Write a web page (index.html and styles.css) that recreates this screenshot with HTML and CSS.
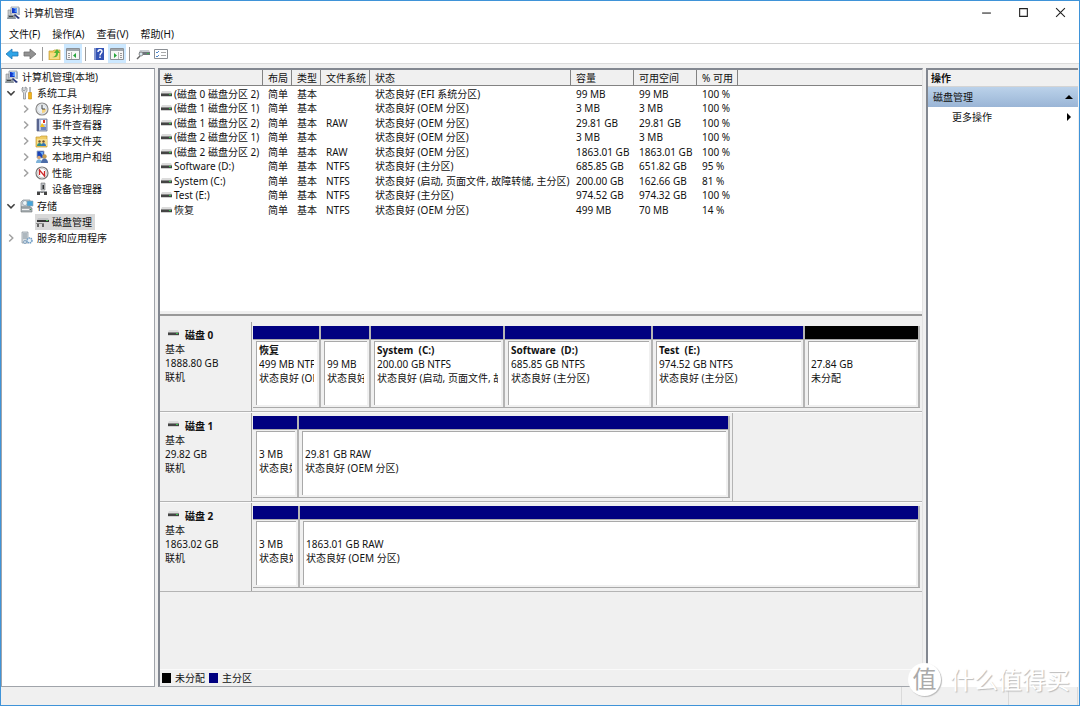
FILE: index.html
```html
<!DOCTYPE html>
<html lang="zh-CN">
<head>
<meta charset="utf-8">
<meta name="viewport" content="width=device-width, initial-scale=1">
<title>计算机管理</title>
<link rel="stylesheet" href="styles.css">
</head>
<body>
<svg class="defs" aria-hidden="true">
  <symbol id="i-computer" viewBox="0 0 14 14">
    <path d="M1 4h3v6H1z" fill="#c3c8cd" stroke="#888" stroke-width=".6"/>
    <path d="M4 1h8v7H4z" fill="#dfe3e8" stroke="#8a9098" stroke-width=".7"/>
    <path d="M5 2h5v5H5z" fill="#1238c8"/><path d="M6 2l3 2-2 1 3 2V2z" fill="#5fa0ff"/>
    <path d="M11 2h2v7h-2z" fill="#aab4c4"/>
    <path d="M1 9h7l1 4H0z" fill="#8d969c"/><path d="M2 10h4v1H2z" fill="#444"/>
    <path d="M8 8l5 4-2 1-4-4z" fill="#26357a"/>
  </symbol>
  <symbol id="i-tools" viewBox="0 0 14 14">
    <path d="M3 1v3l1 1 1-1V1l2 1v3L5.500 7v6h-2V7L2 5V2z" fill="#d8dadd" stroke="#808489" stroke-width=".7"/>
    <path d="M10 1v6" stroke="#8c9197" stroke-width="1.300"/><path d="M8.500 6.500h3v6.500h-3z" fill="#f0b41c" stroke="#c98a0a" stroke-width=".6"/>
  </symbol>
  <symbol id="i-clock" viewBox="0 0 14 14">
    <circle cx="7" cy="7" r="6" fill="#fafafa" stroke="#8c8c8c" stroke-width="1.200"/><circle cx="7" cy="7" r="4.600" fill="#e9eef3" stroke="#c5c9cc" stroke-width=".6"/>
    <path d="M7 7h4a4 4 0 0 1-4 4z" fill="#f5d27e"/><path d="M7 3v4h3" fill="none" stroke="#444" stroke-width="1"/>
  </symbol>
  <symbol id="i-events" viewBox="0 0 14 14">
    <path d="M2 1h10v12H2z" fill="#b9c6e4" stroke="#6a7390" stroke-width=".8"/><path d="M2 1h2v12H2z" fill="#59658f"/>
    <path d="M6 2h5v4H6z" fill="#fff"/><path d="M8 2h2v3H8z" fill="#d93222"/><path d="M5 9l2-4 3 4z" fill="#f3c21d"/><path d="M6 9h5v3H6z" fill="#6f85be"/>
  </symbol>
  <symbol id="i-share" viewBox="0 0 14 14">
    <path d="M1 3h4l1-1h6v11H1z" fill="#f1cc63" stroke="#c49a31" stroke-width=".7"/><path d="M2 5h10v7H2z" fill="#f8e08f"/>
    <circle cx="4.500" cy="7.500" r="1.200" fill="#725131"/><circle cx="8.500" cy="7.500" r="1.200" fill="#725131"/>
    <path d="M2 12c0-4 5-4 5 0z" fill="#2f8d83"/><path d="M6 12c0-4 5-4 5 0z" fill="#3576b8"/>
  </symbol>
  <symbol id="i-users" viewBox="0 0 14 14">
    <path d="M2 1h7v7H2z" fill="#1743b9" stroke="#9ca8b9" stroke-width=".8"/><path d="M5 2h3v4z" fill="#66a8f2"/>
    <circle cx="4" cy="7.500" r="1.800" fill="#d6a676"/><path d="M1 13c0-5 6-5 6 0z" fill="#7eb2d9"/>
    <circle cx="9.500" cy="6.500" r="2.200" fill="#c39a50"/><path d="M6 13c0-6 7-6 7 0z" fill="#4c6da8"/>
  </symbol>
  <symbol id="i-perf" viewBox="0 0 14 14">
    <circle cx="7" cy="7" r="6" fill="#fff" stroke="#787878" stroke-width="1.200"/><circle cx="7" cy="7" r="4.500" fill="none" stroke="#aaa" stroke-width=".6"/>
    <path d="M4.500 9V4l5 6V5" fill="none" stroke="#cc2929" stroke-width="1.300"/>
  </symbol>
  <symbol id="i-device" viewBox="0 0 14 14">
    <path d="M6 1h4v7H6z" fill="#b7bbc0" stroke="#777" stroke-width=".6"/><path d="M7.500 3h1.500v4H7.500z" fill="#313131"/>
    <path d="M2 9h10v2H2z" fill="#9fa4a9"/><path d="M2 10h3v3H2zM9 10h3v3H9z" fill="#444"/><path d="M6 10h2v1H6z" fill="#777"/>
  </symbol>
  <symbol id="i-storage" viewBox="0 0 14 14">
    <path d="M1 3l2-2h7v7H1z" fill="#d4d9dd" stroke="#7f878d" stroke-width=".7"/><circle cx="5" cy="4" r="2.500" fill="#eef5f7" stroke="#789" stroke-width=".6"/>
    <path d="M7 2h6v5H7z" fill="#48a4d8" stroke="#96a5ad" stroke-width=".6"/>
    <path d="M1 8h9l2 1v4H1z" fill="#a8afb3" stroke="#6b7276" stroke-width=".6"/><path d="M2 10h7v1H2z" fill="#f1f1f1"/><path d="M10 10h1v1h-1z" fill="#2ea943"/>
  </symbol>
  <symbol id="i-diskmgmt" viewBox="0 0 14 14">
    <path d="M3 3h10l1 2H2z" fill="#c2c4c6"/><path d="M2 5h12v2H2z" fill="#363636"/><path d="M11 5h2v1h-2z" fill="#4fc25c"/>
    <path d="M1 8h8v1H1z" fill="#909090"/><path d="M2 9h2v3H2zM7 9h2v3H7z" fill="#666"/>
  </symbol>
  <symbol id="i-services" viewBox="0 0 14 14">
    <path d="M2 1h6v11H2z" fill="#d7dce0" stroke="#88929b" stroke-width=".7"/><path d="M3 3h4M3 5h4M3 7h4" stroke="#70808d" stroke-width=".8"/>
    <circle cx="9.500" cy="9.500" r="2.500" fill="#e9f2f9" stroke="#6f9cc4" stroke-width="1.500" stroke-dasharray="1.500 .6"/><circle cx="5" cy="11" r="1.500" fill="#d8e4ee" stroke="#7397b8" stroke-width=".8"/>
  </symbol>
  <symbol id="i-drive" viewBox="0 0 11 6">
    <path d="M1 0h9l1 2H0z" fill="#dcdcdc"/><path d="M0 2h11v3H0z" fill="#444"/><path d="M0 2h11v1H0z" fill="#8a8a8a"/><path d="M0 5h11v1H0z" fill="#d0d0d0"/><path d="M8 3h2v1H8z" fill="#37c24b"/>
  </symbol>
  <symbol id="i-open" viewBox="0 0 10 10"><path d="M2 3.500l3 3 3-3" fill="none" stroke="#404040" stroke-width="1.300"/></symbol>
  <symbol id="i-closed" viewBox="0 0 10 10"><path d="M3.500 2l3 3-3 3" fill="none" stroke="#a0a0a0" stroke-width="1.200"/></symbol>
  <symbol id="i-pane-left" viewBox="0 0 14 12">
    <path d="M.5.5h13v11H.5z" fill="#f6f6f6" stroke="#8b9096"/><path d="M1 1h12v2H1z" fill="#a1a7ad"/><path d="M2 5.500h2M2 7.500h2M2 9.500h2" stroke="#999"/><path d="M5.500 4v7" stroke="#b5b5b5"/><path d="M10 5v5L7 7.500z" fill="#26a53a"/>
  </symbol>
  <symbol id="i-pane-right" viewBox="0 0 14 12">
    <path d="M.5.5h13v11H.5z" fill="#f6f6f6" stroke="#8b9096"/><path d="M1 1h12v2H1z" fill="#a1a7ad"/><path d="M10 5.500h2M10 7.500h2M10 9.500h2" stroke="#999"/><path d="M8.500 4v7" stroke="#b5b5b5"/><path d="M4 5v5l3-2.500z" fill="#26a53a"/>
  </symbol>
</svg>

<div class="window">
  <header class="titlebar">
    <svg class="icon"><use href="#i-computer"/></svg>
    <h1 class="title">计算机管理</h1>
    <button class="caption" aria-label="最小化"><svg viewBox="0 0 10 10"><path d="M1 5.500h8" stroke="#222" fill="none"/></svg></button>
    <button class="caption" aria-label="最大化"><svg viewBox="0 0 10 10"><path d="M1.500 1.500h7v7h-7z" stroke="#222" fill="none"/></svg></button>
    <button class="caption" aria-label="关闭"><svg viewBox="0 0 10 10"><path d="M1 1l8 8M9 1L1 9" stroke="#222" fill="none"/></svg></button>
  </header>

  <nav class="menubar">
    <button>文件(F)</button><button>操作(A)</button><button>查看(V)</button><button>帮助(H)</button>
  </nav>

  <div class="toolbar">
    <button class="tool" aria-label="后退"><svg viewBox="0 0 14 12"><path d="M1 6l6-5v3h6v4H7v3z" fill="#2fa4e7" stroke="#2277b5" stroke-width=".8"/></svg></button>
    <button class="tool" aria-label="前进"><svg viewBox="0 0 14 12"><path d="M13 6L7 1v3H1v4h6v3z" fill="#929292" stroke="#6f6f6f" stroke-width=".8"/></svg></button>
    <span class="sep"></span>
    <button class="tool" aria-label="上一级"><svg viewBox="0 0 14 12"><path d="M1 3h4l1-1h6v10H1z" fill="#efc95c" stroke="#c39b36" stroke-width=".7"/><path d="M2 5h9v6H2z" fill="#f7dd85"/><path d="M4 9c3 0 4-2 4-4H6l3-4 3 4h-2c0 4-2 5-6 4z" fill="#54b434"/></svg></button>
    <button class="tool on" aria-label="显示控制台树"><svg><use href="#i-pane-left"/></svg></button>
    <span class="sep"></span>
    <button class="tool" aria-label="帮助"><svg viewBox="0 0 14 12"><path d="M2 0h10v12H2z" fill="#3453b5"/><path d="M2 0h2v12H2z" fill="#8295cf"/><path d="M6 4c0-3 4-3 4-.5C10 5 8 5 8 7.500M8 8.500v1.500" fill="none" stroke="#fff" stroke-width="1.400"/></svg></button>
    <button class="tool on" aria-label="显示操作窗格"><svg><use href="#i-pane-right"/></svg></button>
    <span class="sep"></span>
    <button class="tool" aria-label="重新扫描磁盘"><svg viewBox="0 0 14 12"><path d="M4 2h9l1 2H3z" fill="#c7cbd0"/><path d="M3 4h11v3H3z" fill="#6f757b"/><path d="M11 5h2v1h-2z" fill="#37b54a"/><circle cx="5" cy="6" r="2" fill="#d9e8ef" stroke="#777" stroke-width=".8"/><path d="M4 8l-3 3" stroke="#666" stroke-width="1.400"/></svg></button>
    <button class="tool" aria-label="属性"><svg viewBox="0 0 14 12"><path d="M.5 1.500h13v9H.5z" fill="#fff" stroke="#8b8f94"/><path d="M2 4l1 1 2-2M2 8l1 1 2-2" fill="none" stroke="#3978c5" stroke-width=".9"/><path d="M7 4.500h5M7 7.500h5" stroke="#aaa"/></svg></button>
  </div>

  <main class="content">
    <nav class="tree" aria-label="控制台树">
      <div class="node root"><svg class="icon"><use href="#i-computer"/></svg><span>计算机管理(本地)</span></div>
      <div class="group">
        <div class="node"><svg class="chev"><use href="#i-open"/></svg><svg class="icon"><use href="#i-tools"/></svg><span>系统工具</span></div>
        <div class="node sub"><svg class="chev"><use href="#i-closed"/></svg><svg class="icon"><use href="#i-clock"/></svg><span>任务计划程序</span></div>
        <div class="node sub"><svg class="chev"><use href="#i-closed"/></svg><svg class="icon"><use href="#i-events"/></svg><span>事件查看器</span></div>
        <div class="node sub"><svg class="chev"><use href="#i-closed"/></svg><svg class="icon"><use href="#i-share"/></svg><span>共享文件夹</span></div>
        <div class="node sub"><svg class="chev"><use href="#i-closed"/></svg><svg class="icon"><use href="#i-users"/></svg><span>本地用户和组</span></div>
        <div class="node sub"><svg class="chev"><use href="#i-closed"/></svg><svg class="icon"><use href="#i-perf"/></svg><span>性能</span></div>
        <div class="node sub"><span class="chev"></span><svg class="icon"><use href="#i-device"/></svg><span>设备管理器</span></div>
      </div>
      <div class="group">
        <div class="node"><svg class="chev"><use href="#i-open"/></svg><svg class="icon"><use href="#i-storage"/></svg><span>存储</span></div>
        <div class="node sub"><span class="chev"></span><div class="selected"><svg class="icon"><use href="#i-diskmgmt"/></svg><span>磁盘管理</span></div></div>
        <div class="node"><svg class="chev"><use href="#i-closed"/></svg><svg class="icon"><use href="#i-services"/></svg><span>服务和应用程序</span></div>
      </div>
    </nav>

    <section class="center">
      <div class="volumes">
        <table>
          <colgroup><col class="c-name"><col class="c-short"><col class="c-short"><col class="c-fs"><col class="c-status"><col class="c-size"><col class="c-size"><col class="c-pct"><col></colgroup>
          <thead><tr><th>卷</th><th>布局</th><th>类型</th><th>文件系统</th><th>状态</th><th>容量</th><th>可用空间</th><th>% 可用</th><th></th></tr></thead>
          <tbody>
            <tr><td><svg class="drive"><use href="#i-drive"/></svg>(磁盘 0 磁盘分区 2)</td><td>简单</td><td>基本</td><td></td><td>状态良好 (EFI 系统分区)</td><td>99 MB</td><td>99 MB</td><td>100 %</td><td></td></tr>
            <tr><td><svg class="drive"><use href="#i-drive"/></svg>(磁盘 1 磁盘分区 1)</td><td>简单</td><td>基本</td><td></td><td>状态良好 (OEM 分区)</td><td>3 MB</td><td>3 MB</td><td>100 %</td><td></td></tr>
            <tr><td><svg class="drive"><use href="#i-drive"/></svg>(磁盘 1 磁盘分区 2)</td><td>简单</td><td>基本</td><td>RAW</td><td>状态良好 (OEM 分区)</td><td>29.81 GB</td><td>29.81 GB</td><td>100 %</td><td></td></tr>
            <tr><td><svg class="drive"><use href="#i-drive"/></svg>(磁盘 2 磁盘分区 1)</td><td>简单</td><td>基本</td><td></td><td>状态良好 (OEM 分区)</td><td>3 MB</td><td>3 MB</td><td>100 %</td><td></td></tr>
            <tr><td><svg class="drive"><use href="#i-drive"/></svg>(磁盘 2 磁盘分区 2)</td><td>简单</td><td>基本</td><td>RAW</td><td>状态良好 (OEM 分区)</td><td>1863.01 GB</td><td>1863.01 GB</td><td>100 %</td><td></td></tr>
            <tr><td><svg class="drive"><use href="#i-drive"/></svg>Software (D:)</td><td>简单</td><td>基本</td><td>NTFS</td><td>状态良好 (主分区)</td><td>685.85 GB</td><td>651.82 GB</td><td>95 %</td><td></td></tr>
            <tr><td><svg class="drive"><use href="#i-drive"/></svg>System (C:)</td><td>简单</td><td>基本</td><td>NTFS</td><td>状态良好 (启动, 页面文件, 故障转储, 主分区)</td><td>200.00 GB</td><td>162.66 GB</td><td>81 %</td><td></td></tr>
            <tr><td><svg class="drive"><use href="#i-drive"/></svg>Test (E:)</td><td>简单</td><td>基本</td><td>NTFS</td><td>状态良好 (主分区)</td><td>974.52 GB</td><td>974.32 GB</td><td>100 %</td><td></td></tr>
            <tr><td><svg class="drive"><use href="#i-drive"/></svg>恢复</td><td>简单</td><td>基本</td><td>NTFS</td><td>状态良好 (OEM 分区)</td><td>499 MB</td><td>70 MB</td><td>14 %</td><td></td></tr>
          </tbody>
        </table>
      </div>

      <div class="disks">
        <article class="disk">
          <div class="info"><h2><svg class="drive"><use href="#i-drive"/></svg>磁盘 0</h2><p>基本</p><p>1888.80 GB</p><p>联机</p></div>
          <div class="track"><div class="parts" style="grid-template-columns:68fr 50fr 134fr 148fr 152fr 115fr">
            <div class="part"><div class="box"><b>恢复</b><p>499 MB NTFS</p><p>状态良好 (OEM 分区)</p></div></div>
            <div class="part"><div class="box"><b></b><p>99 MB</p><p>状态良好 (EFI 系统分区)</p></div></div>
            <div class="part"><div class="box"><b>System&nbsp; (C:)</b><p>200.00 GB NTFS</p><p>状态良好 (启动, 页面文件, 故障转储, 主分区)</p></div></div>
            <div class="part"><div class="box"><b>Software&nbsp; (D:)</b><p>685.85 GB NTFS</p><p>状态良好 (主分区)</p></div></div>
            <div class="part"><div class="box"><b>Test&nbsp; (E:)</b><p>974.52 GB NTFS</p><p>状态良好 (主分区)</p></div></div>
            <div class="part free"><div class="box"><b></b><p>27.84 GB</p><p>未分配</p></div></div>
          </div></div>
        </article>
        <article class="disk">
          <div class="info"><h2><svg class="drive"><use href="#i-drive"/></svg>磁盘 1</h2><p>基本</p><p>29.82 GB</p><p>联机</p></div>
          <div class="track short" style="width:72%"><div class="parts" style="grid-template-columns:46fr 431fr">
            <div class="part"><div class="box"><b></b><p>3 MB</p><p>状态良好 (OEM 分区)</p></div></div>
            <div class="part"><div class="box"><b></b><p>29.81 GB RAW</p><p>状态良好 (OEM 分区)</p></div></div>
          </div></div>
        </article>
        <article class="disk">
          <div class="info"><h2><svg class="drive"><use href="#i-drive"/></svg>磁盘 2</h2><p>基本</p><p>1863.02 GB</p><p>联机</p></div>
          <div class="track"><div class="parts" style="grid-template-columns:47fr 620fr">
            <div class="part"><div class="box"><b></b><p>3 MB</p><p>状态良好 (OEM 分区)</p></div></div>
            <div class="part"><div class="box"><b></b><p>1863.01 GB RAW</p><p>状态良好 (OEM 分区)</p></div></div>
          </div></div>
        </article>
      </div>
      <div class="legend"><span class="swatch unallocated"></span><span>未分配</span><span class="swatch"></span><span>主分区</span></div>
    </section>

    <aside class="actions">
      <h2 class="actions-title">操作</h2>
      <button class="actions-head"><span>磁盘管理</span><svg viewBox="0 0 8 8"><path d="M0 6l4-4 4 4z"/></svg></button>
      <button class="actions-item"><span>更多操作</span><svg viewBox="0 0 8 8"><path d="M2 0l4 4-4 4z"/></svg></button>
    </aside>
  </main>

  <footer class="statusbar"><span></span><span></span><span></span></footer>
  <div class="watermark"><span class="badge">值</span><span class="brand">什么值得买</span></div>
</div>
</body>
</html>
```

FILE: styles.css
```css
* { box-sizing: border-box; }

body {
  margin: 0;
  font: 10px/14px "Noto Sans", "Noto Sans CJK SC", sans-serif;
  color: #111;
}

h1, h2, p { margin: 0; font-size: inherit; font-weight: normal; }
svg { display: block; flex: none; }
.defs { position: absolute; width: 0; height: 0; }

button {
  border: 0;
  padding: 0;
  background: none;
  font: inherit;
  color: inherit;
}

.window {
  position: relative;
  display: flex;
  flex-direction: column;
  min-height: 100vh;
  border: 1px solid #3f93d8;
  background: #f0f0f0;
}

.icon { width: 14px; height: 14px; }
.drive { width: 11px; height: 6px; }

/* Title, menu and toolbar */
.titlebar {
  display: flex;
  align-items: center;
  height: 23px;
  padding-left: 6px;
  background: #fff;
}
.title { flex: 1; padding-left: 3px; }
.caption { display: grid; place-items: center; width: 37px; height: 23px; }
.caption svg { width: 11px; height: 11px; }

.menubar {
  display: flex;
  gap: 12px;
  height: 20px;
  padding-left: 8px;
  background: #fff;
  border-bottom: 1px solid #d4d4d4;
}

.toolbar {
  display: flex;
  align-items: center;
  height: 20px;
  padding-left: 2px;
  background: #fff;
  border-bottom: 1px solid #dcdcdc;
}
.tool { display: grid; place-items: center; width: 18px; height: 19px; }
.tool svg { width: 14px; height: 12px; }
.tool.on { background: #cce8ff; }
.sep { width: 1px; height: 14px; margin: 0 3px; background: #999; }
.sep ~ .sep { margin-right: 4px; }

/* Three panes */
.content {
  flex: 1;
  display: grid;
  grid-template-columns: 154px minmax(0, 1fr) 152px;
  gap: 3px;
  padding: 4px 1px 0 0;
}

.tree {
  background: #fff;
  border: 1px solid #a0a4aa;
  border-top-color: #828790;
}
.node { display: flex; align-items: center; gap: 3px; height: 16px; padding-left: 3px; white-space: nowrap; }
.node.sub { padding-left: 18px; }
.group + .group { margin-top: 1px; }
.chev { width: 12px; height: 12px; }
.selected { display: flex; align-items: center; gap: 3px; height: 16px; padding-right: 3px; background: #d9d9d9; }

.center {
  display: flex;
  flex-direction: column;
  min-width: 0;
  border: 1px solid #a0a4aa;
  border-top: 2px solid #828790;
  border-left: 2px solid #828790;
  border-right-color: #e3e3e3;
}

.volumes {
  height: 246px;
  background: linear-gradient(#fff 0 241px, #f0f0f0 241px);
  border-bottom: 2px solid #999;
  overflow: hidden;
}
.volumes table { width: 100%; table-layout: fixed; border-collapse: separate; border-spacing: 0; }
.c-name { width: 103px; }
.c-short { width: 29px; }
.c-fs { width: 49px; }
.c-status { width: 201px; }
.c-size { width: 63px; }
.c-pct { width: 41px; }
.volumes th {
  height: 16px;
  padding: 0 0 0 5px;
  background: #f0f0f0;
  border-right: 1px solid #828282;
  border-bottom: 1px solid #828282;
  font-weight: normal;
  text-align: left;
  white-space: nowrap;
}
.volumes th:first-child { padding-left: 3px; }
.volumes th:last-child { border-right: 0; }
.volumes td { height: 14px; padding: 0 0 0 5px; line-height: 14px; white-space: nowrap; }
.volumes tr:nth-child(odd) td { height: 15px; }
.volumes td:first-child { padding-left: 1px; }
.volumes td .drive { display: inline-block; margin-right: 2px; vertical-align: 1px; }

/* Disk map */
.disks { flex: 1; padding-top: 6px; }
.disk {
  display: grid;
  grid-template-columns: 92px minmax(0, 1fr);
  height: 90px;
  padding-right: 2px;
  border-bottom: 1px solid #b4b4b4;
}
.disk + .disk { border-top: 1px solid #fafafa; }
.info {
  padding: 6px 0 0 5px;
  border-right: 1px solid #a0a0a0;
}
.info h2 { display: flex; align-items: center; gap: 6px; padding-left: 3px; font-weight: bold; }
.info .drive { margin-bottom: 4px; }
.track { padding: 4px 0 3px 1px; }
.disk + .disk .track { padding-top: 3px; }
.track.short { padding-right: 2px; border-right: 1px solid #b4b4b4; }
.parts { display: grid; height: 100%; border-bottom: 1px solid #a9a9a9; }
.part {
  min-width: 0;
  padding: 15px 2px 2px 3px;
  border-right: 2px solid #b4b4b4;
  background: linear-gradient(#000080 0 13px, #a9a9a9 13px 14px, #f0f0f0 14px);
}
.part.free { background: linear-gradient(#000 0 13px, #a9a9a9 13px 14px, #f0f0f0 14px); }
.box {
  height: 100%;
  padding: 1px 3px 0 2px;
  background: #fff;
  border-top: 1px solid #a9a9a9;
  border-left: 1px solid #a9a9a9;
  overflow: hidden;
  white-space: nowrap;
}
.box b { display: block; height: 14px; }
.box p { overflow: hidden; }

.legend {
  display: flex;
  align-items: center;
  gap: 4px;
  height: 17px;
  padding-left: 2px;
  border-top: 1px solid #fafafa;
}
.swatch { width: 9px; height: 10px; background: #000080; }
.swatch.unallocated { background: #000; }

/* Actions */
.actions {
  display: flex;
  flex-direction: column;
  background: #fff;
  border-top: 2px solid #828790;
  border-left: 2px solid #828790;
}
.actions-title { height: 17px; padding: 1px 0 0 3px; background: #f0f0f0; border-bottom: 1px solid #d4d4d4; font-weight: bold; }
.actions-head, .actions-item { display: flex; align-items: center; justify-content: space-between; height: 20px; padding: 0 5px; }
.actions-head { background: linear-gradient(#bbd2ea, #9ab5d6); }
.actions-item { padding-left: 24px; }
.actions svg { width: 8px; height: 8px; }

.statusbar { display: flex; justify-content: flex-end; height: 18px; }
.statusbar span { width: 107px; border-left: 1px solid #dadada; }
.statusbar span:nth-child(2) { width: 69px; }
.statusbar span:last-child { width: 2px; }

.watermark {
  position: absolute;
  right: 9px;
  bottom: 9px;
  display: flex;
  align-items: center;
  gap: 9px;
  font-size: 24px;
  line-height: 32px;
  color: #fff;
}
.badge {
  width: 33px;
  height: 33px;
  border-radius: 50%;
  background: #fff;
  color: #aaa;
  text-align: center;
  box-shadow: 1px 1px 1px #bbb;
}
.brand { text-shadow: 1px 1px 1px #bbb; }
```
